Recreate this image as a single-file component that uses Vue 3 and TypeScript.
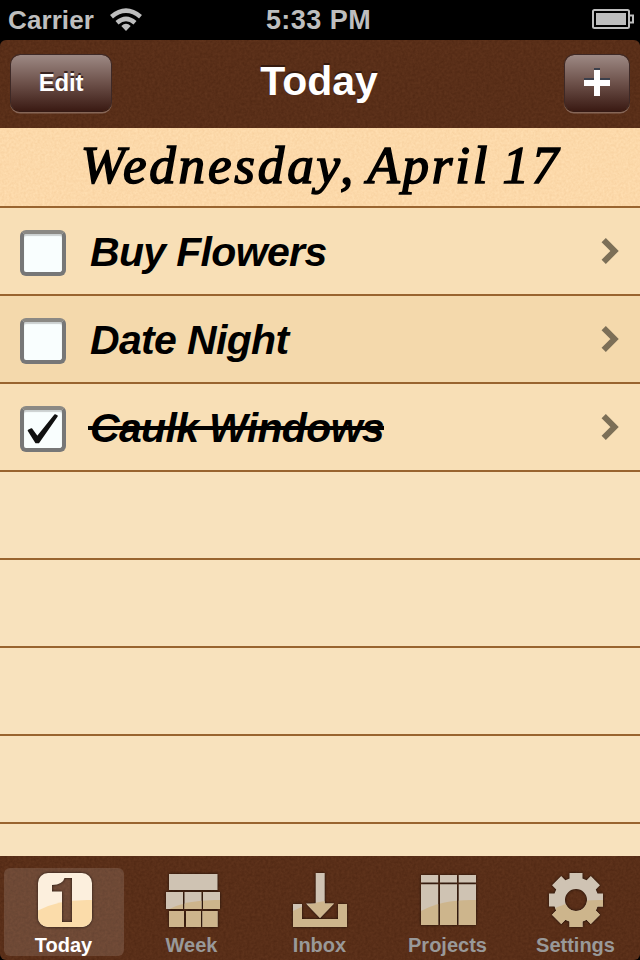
<script setup lang="ts">
interface Task {
  title: string
  done: boolean
}

interface Tab {
  id: string
  label: string
  shape: string
}

const tasks: Task[] = [
  { title: 'Buy Flowers', done: false },
  { title: 'Date Night', done: false },
  { title: 'Caulk Windows', done: true },
]

const emptyRows = 5

function gearPath(): string {
  const teeth: string[] = []
  const point = (x: number, y: number, turn: number) => {
    const a = (turn * Math.PI) / 4
    const px = 28 + x * Math.cos(a) - y * Math.sin(a)
    const py = 28 + x * Math.sin(a) + y * Math.cos(a)
    return `${px.toFixed(2)} ${py.toFixed(2)}`
  }
  for (let i = 0; i < 8; i++) {
    const outer = i % 2 === 0 ? 27 : 27.4
    teeth.push(point(-6.5, -21.5, i), point(-6.5, -outer, i), point(6.5, -outer, i), point(6.5, -21.5, i))
  }
  return `M${teeth.join('L')}Z M39 28A11 11 0 1 0 17 28A11 11 0 1 0 39 28Z`
}

const tabs: Tab[] = [
  {
    id: 'today',
    label: 'Today',
    shape:
      'M12 1H46A10 10 0 0 1 56 11V45A10 10 0 0 1 46 55H12A10 10 0 0 1 2 45V11A10 10 0 0 1 12 1Z M28.5 6Q27 12.5 16 13V19.500H26V50H36V6Z',
  },
  {
    id: 'week',
    label: 'Week',
    shape:
      'M5 2H53.500V18H5Z M2 20H19V37H2Z M20.500 20H37.500V37H20.500Z M39 20H56V37H39Z M5 39H20V55H5Z M22 39H37V55H22Z M38.500 39H53.500V55H38.500Z',
  },
  {
    id: 'inbox',
    label: 'Inbox',
    shape: 'M23.700 1H32.700V31.500H42L28 46L14 31.500H23.700Z M1 32H10V47H46V32H55V55H1Z',
  },
  {
    id: 'projects',
    label: 'Projects',
    shape:
      'M1 3H18.200V10.500H1Z M20 3H37V10.500H20Z M38.700 3H56V10.500H38.700Z M1 12.200H18.200V53H1Z M20 12.200H37V53H20Z M38.700 12.200H56V53H38.700Z',
  },
  { id: 'settings', label: 'Settings', shape: gearPath() },
]
const active = 'today'
</script>

<template>
  <div class="screen">
    <header class="status">
      <div class="carrier">
        <span class="carrier-name">Carrier</span>
        <svg class="wifi" width="34" height="24" viewBox="0 0 34 24">
          <g fill="none" stroke="#bebebe" stroke-width="4.500">
            <path d="M2.500 8.800Q17 -3.400 31.500 8.800" />
            <path d="M8 14.800Q17 7 26 14.800" />
          </g>
          <path d="M12.300 18Q17 13.400 21.700 18L17 23Z" fill="#bebebe" />
        </svg>
      </div>
      <span class="clock">5:33 PM</span>
      <svg class="battery" width="42" height="20" viewBox="0 0 42 20">
        <rect x="1" y="1" width="36" height="18" rx="1.500" fill="none" stroke="#bebebe" stroke-width="2" />
        <rect x="4" y="4" width="30" height="12" fill="#bebebe" />
        <path d="M38 6.500H41V13.500H38" fill="none" stroke="#bebebe" stroke-width="2" />
      </svg>
    </header>

    <nav class="navbar">
      <svg class="grain" width="640" height="88">
        <filter id="leather" x="0" y="0" width="100%" height="100%" color-interpolation-filters="sRGB">
          <feTurbulence type="fractalNoise" baseFrequency="0.38" numOctaves="2" seed="4" />
          <feColorMatrix values="0.080 0 0 0 0.309 0.060 0 0 0 0.152 0.045 0 0 0 0.072 0 0 0 0 1" />
        </filter>
        <rect width="640" height="88" filter="url(#leather)" />
      </svg>
      <button class="bar-button edit"><span class="edit-text">Edit</span></button>
      <h1 class="title"><span class="title-text">Today</span></h1>
      <button class="bar-button add">
        <svg width="30" height="32" viewBox="0 0 30 32">
          <path d="M12 2H18V12H28V18H18V28H12V18H2V12H12Z" fill="#3b3f4b" />
          <path d="M12 4H18V14H28V20H18V30H12V20H2V14H12Z" fill="#fff" />
        </svg>
      </button>
    </nav>

    <section class="date">
      <svg class="grain" width="640" height="78">
        <filter id="paper" x="0" y="0" width="100%" height="100%" color-interpolation-filters="sRGB">
          <feTurbulence type="fractalNoise" baseFrequency="0.42" numOctaves="2" seed="9" />
          <feColorMatrix values="0.040 0 0 0 0.968 0.070 0 0 0 0.815 0.090 0 0 0 0.620 0 0 0 0 1" />
        </filter>
        <rect width="640" height="78" filter="url(#paper)" />
      </svg>
      <span class="date-text">Wednesday, April 17</span>
    </section>

    <main class="list">
      <div v-for="task in tasks" :key="task.title" class="row task">
        <span class="checkbox">
          <svg v-if="task.done" width="38" height="38" viewBox="0 0 38 38">
            <path d="M4.500 20.500L7.500 19L13.300 27L31 5L33 6L14.500 32.500H12Z" fill="#111" stroke="#111" stroke-width="1.600" stroke-linejoin="round" />
          </svg>
        </span>
        <span class="name" :class="{ done: task.done }">{{ task.title }}</span>
        <svg class="chevron" width="20" height="28" viewBox="0 0 20 28">
          <path d="M3.700 3.200L14.500 14L3.700 24.800" fill="none" stroke="#7c6f57" stroke-width="6" />
        </svg>
      </div>
      <div v-for="n in emptyRows" :key="n" class="row"></div>
    </main>

    <footer class="tabbar">
      <svg class="grain" width="640" height="104">
        <rect width="640" height="104" filter="url(#leather)" />
      </svg>
      <div v-for="tab in tabs" :key="tab.id" class="tab" :class="[tab.id, { active: tab.id === active }]">
        <svg class="icon" width="56" height="56" viewBox="0 0 56 56">
          <clipPath :id="`shape-${tab.id}`">
            <path :d="tab.shape" clip-rule="evenodd" />
          </clipPath>
          <g :clip-path="`url(#shape-${tab.id})`">
            <rect class="icon-top" width="56" height="56" />
            <path class="icon-bottom" d="M0 39.500Q22 27 56 28V56H0Z" />
          </g>
        </svg>
        <span class="label">{{ tab.label }}</span>
      </div>
    </footer>
  </div>
</template>

<style>
body {
  margin: 0;
  background: #000;
}
</style>

<style scoped>
.screen {
  width: 640px;
  height: 960px;
  display: flex;
  flex-direction: column;
  overflow: hidden;
  background: #000;
  font-family: 'Liberation Sans', Arial, sans-serif;
}

.status {
  height: 40px;
  flex: none;
  display: grid;
  grid-template-columns: 1fr auto 1fr;
  align-items: center;
  box-sizing: border-box;
  padding: 0 6px 0 8px;
  color: #bebebe;
  font-size: 27px;
  font-weight: bold;
}

.carrier {
  display: flex;
  align-items: center;
  gap: 15px;
}

.carrier-name {
  font-size: 26px;
  letter-spacing: 0.100px;
}

.clock {
  margin-right: 5px;
  letter-spacing: 0.450px;
}

.battery {
  justify-self: end;
  margin-top: -2px;
}

.navbar {
  position: relative;
  height: 88px;
  flex: none;
  display: grid;
  grid-template-columns: 1fr auto 1fr;
  align-items: center;
  box-sizing: border-box;
  padding: 0 10px 2px;
  border-radius: 6px 6px 0 0;
  overflow: hidden;
}

.grain {
  position: absolute;
  left: 0;
  top: 0;
}

.bar-button,
.title,
.date-text,
.tab {
  position: relative;
}

.bar-button {
  height: 58px;
  display: flex;
  align-items: center;
  justify-content: center;
  padding: 0;
  border: 1.500px solid #3e2926;
  border-bottom-color: #351a14;
  border-radius: 10px;
  background: linear-gradient(#9d8984, #6d514a 50%, #3a1a13) padding-box;
  box-shadow: 0 1.500px 0 #866657;
  font-family: inherit;
  color: #fff;
}

.edit {
  width: 102px;
  font-size: 24px;
  font-weight: bold;
  letter-spacing: -0.200px;
  text-shadow: 0 -2px 0 #382320;
}

.add {
  width: 66px;
  justify-self: end;
}

.add svg {
  margin-top: -2px;
}

.title {
  margin: -3px 0 0 -2px;
  font-size: 41px;
  font-weight: bold;
  color: #fff;
  text-shadow: 0 -2px 0 #351a0e;
}

.date {
  position: relative;
  height: 80px;
  flex: none;
  box-sizing: border-box;
  display: flex;
  justify-content: center;
  align-items: center;
  border-bottom: 2px solid #99642f;
  background: #fcd9a9;
}

.date-text {
  font-family: Palatino, 'Palatino Linotype', 'Liberation Serif', serif;
  font-size: 53px;
  line-height: 60px;
  font-style: italic;
  white-space: nowrap;
  color: #000;
  -webkit-text-stroke: 1.600px #000;
  letter-spacing: 2.850px;
  word-spacing: -4px;
  padding: 0 0 5px 2px;
}

.list {
  flex: 1;
  min-height: 0;
  overflow: hidden;
  background: #f8e2bd;
}

.row {
  height: 88px;
  box-sizing: border-box;
  border-bottom: 2px solid #99642f;
}

.task {
  display: flex;
  align-items: center;
  padding: 2px 20px 0;
  background: #f8dfb6;
}

.task:nth-child(2) {
  background: #f4d9ac;
}

.checkbox {
  width: 46px;
  height: 46px;
  box-sizing: border-box;
  margin-top: 2px;
  border: 4px solid #777;
  border-top-color: #8b8984;
  border-radius: 6px;
  background: #f9fefe;
  box-shadow: inset 0 2px 1px #cbd0d0;
}

.checkbox svg {
  display: block;
}

.name {
  margin-left: 22px;
  padding-left: 2px;
  flex: none;
  font-size: 41px;
  line-height: 48px;
  font-weight: bold;
  font-style: italic;
  color: #000;
  letter-spacing: -0.660px;
  white-space: nowrap;
}

.name.done {
  background: linear-gradient(#000, #000) 0 22px / 100% 4px no-repeat;
}

.chevron {
  margin-left: auto;
  margin-top: -2px;
}

.tabbar {
  position: relative;
  height: 104px;
  flex: none;
  display: grid;
  grid-template-columns: repeat(5, 128px);
  border-radius: 0 0 6px 6px;
  overflow: hidden;
}

.tab {
  display: flex;
  flex-direction: column;
  align-items: center;
  padding-top: 16px;
  color: #999;
}

.active {
  box-sizing: border-box;
  height: 88px;
  margin: 12px 4px 0;
  padding-top: 4px;
  border-radius: 6px;
  background: rgba(255, 255, 255, 0.130);
  color: #fff;
}

.icon {
  flex: none;
  filter: drop-shadow(0 0 1.500px rgba(0, 0, 0, 0.700));
}

.icon-top {
  fill: #cfc3b3;
}

.icon-bottom {
  fill: #cdb58c;
}

.active .icon-top {
  fill: #fcefdd;
}

.active .icon-bottom {
  fill: #fbdcaa;
}

.label {
  margin: 6px 1px 0 0;
  font-size: 20px;
  line-height: 23px;
  font-weight: bold;
}
</style>
